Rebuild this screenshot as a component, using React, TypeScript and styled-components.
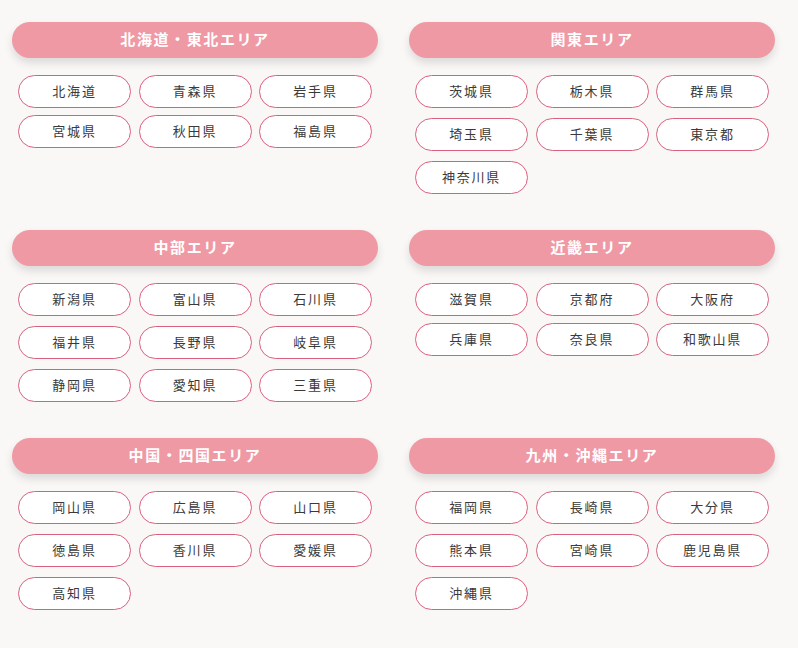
import styled, { createGlobalStyle } from 'styled-components'

const GlobalStyle = createGlobalStyle`
    body {
        margin: 0;
        background-color: #faf8f7;
        font-family: "Noto Sans CJK JP", "Noto Sans", sans-serif;
    }
`

const areas = [
    { title: '北海道・東北エリア', prefs: ['北海道', '青森県', '岩手県', '宮城県', '秋田県', '福島県'] },
    { title: '関東エリア', prefs: ['茨城県', '栃木県', '群馬県', '埼玉県', '千葉県', '東京都', '神奈川県'] },
    { title: '中部エリア', prefs: ['新潟県', '富山県', '石川県', '福井県', '長野県', '岐阜県', '静岡県', '愛知県', '三重県'] },
    { title: '近畿エリア', prefs: ['滋賀県', '京都府', '大阪府', '兵庫県', '奈良県', '和歌山県'] },
    { title: '中国・四国エリア', prefs: ['岡山県', '広島県', '山口県', '徳島県', '香川県', '愛媛県', '高知県'] },
    { title: '九州・沖縄エリア', prefs: ['福岡県', '長崎県', '大分県', '熊本県', '宮崎県', '鹿児島県', '沖縄県'] },
]

const Page = styled.div`
    display: grid;
    grid-template-columns: 366px 366px;
    column-gap: 31px;
    row-gap: 36px;
    align-items: start;
    padding: 22px 0 40px 12px;
`

const Area = styled.section`
    display: flex;
    flex-direction: column;
`

const AreaTitle = styled.h2`
    margin: 0;
    height: 36px;
    line-height: 34px;
    border-radius: 18px;
    background-color: #ef99a5;
    color: #fff;
    font-size: 15px;
    font-weight: 700;
    letter-spacing: 1.6px;
    text-align: center;
    box-shadow: 0 5px 8px rgba(0, 0, 0, 0.12);
`

const PrefGrid = styled.div<{ $gap: number }>`
    display: grid;
    grid-template-columns: repeat(3, 113px);
    column-gap: 7.5px;
    row-gap: ${p => p.$gap}px;
    padding: 17px 6px 0;
`

const Pref = styled.a`
    display: flex;
    align-items: center;
    justify-content: center;
    height: 33px;
    box-sizing: border-box;
    padding-bottom: 2px;
    border: 1px solid #d9607f;
    border-radius: 17px;
    background-color: #fff;
    color: #3a3a3a;
    font-size: 13px;
    letter-spacing: 1.8px;
    text-decoration: none;
    cursor: pointer;
`

const App = () => {
    return (
        <>
            <GlobalStyle />
            <Page>
                {areas.map(area => (
                    <Area key={area.title}>
                        <AreaTitle>{area.title}</AreaTitle>
                        <PrefGrid $gap={area.prefs.length > 6 ? 10 : 7}>
                            {area.prefs.map(pref => (
                                <Pref key={pref}>{pref}</Pref>
                            ))}
                        </PrefGrid>
                    </Area>
                ))}
            </Page>
        </>
    )
}

export default App
